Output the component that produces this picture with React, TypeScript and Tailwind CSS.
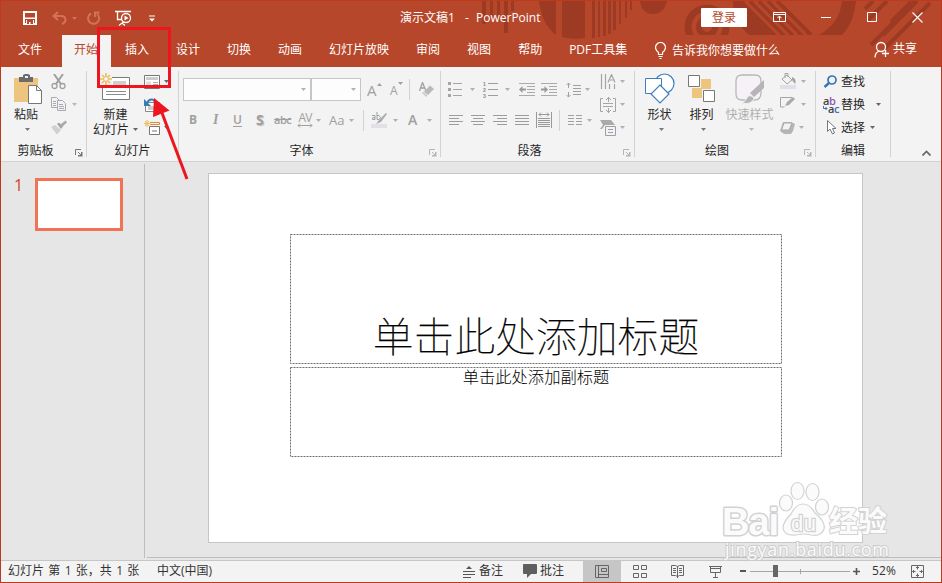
import React from "react";

type IconProps = { w: number; h: number; className?: string; children: React.ReactNode };

function Icon({ w, h, className = "", children }: IconProps) {
  return (
    <svg width={w} height={h} viewBox={`0 0 ${w} ${h}`} fill="none" className={`block shrink-0 ${className}`}>
      {children}
    </svg>
  );
}

function Caret({ className = "" }: { className?: string }) {
  return (
    <Icon w={5} h={3} className={className}>
      <path d="M0 0h5L2.500 3z" fill="currentColor" />
    </Icon>
  );
}

function Lines({ rows, w = 14, h = 13 }: { rows: [number, number, number][]; w?: number; h?: number }) {
  return (
    <Icon w={w} h={h}>
      {rows.map(([x, y, len], i) => (
        <path key={i} d={`M${x} ${y + 0.5}h${len}`} stroke="#9d9d9d" />
      ))}
    </Icon>
  );
}

function Sep() {
  return <div className="my-1 w-px shrink-0 bg-[#d2d2d2]" />;
}

function Launcher({ className = "text-[#777]" }: { className?: string }) {
  return (
    <Icon w={8} h={8} className={className}>
      <path d="M.5 6V.5H6" stroke="currentColor" />
      <path d="M3 3l3.500 3.500" stroke="currentColor" />
      <path d="M7.500 3v4.500H3V6h3V3z" fill="currentColor" />
    </Icon>
  );
}

function Group({
  title,
  width,
  launcher,
  children,
}: {
  title: string;
  width: string;
  launcher?: string;
  children: React.ReactNode;
}) {
  return (
    <div className={`flex shrink-0 flex-col ${width}`}>
      <div className="flex h-[75px] shrink-0">{children}</div>
      <div className="flex h-[18px] items-center text-[#262626]">
        <div className="flex-1 text-center leading-[18px]">{title}</div>
        {launcher && (
          <div className="flex w-4 pl-[5px] pt-[4px]">
            <Launcher className={launcher} />
          </div>
        )}
      </div>
    </div>
  );
}

function Stack({ className, children }: { className: string; children: React.ReactNode }) {
  return <div className={`flex shrink-0 flex-col pt-[3px] ${className}`}>{children}</div>;
}

function Row({ children }: { children: React.ReactNode }) {
  return <div className="flex h-[23px] shrink-0 items-center">{children}</div>;
}

function BigButton({ className, label, icon }: { className: string; label: string; icon: React.ReactNode }) {
  return (
    <div className={`flex shrink-0 flex-col items-center pt-[6px] ${className}`}>
      <div className="flex h-[33px] shrink-0 items-start">{icon}</div>
      <div className="whitespace-nowrap leading-[17px]">{label}</div>
      <Caret className="ml-[3px] mt-[5px] text-[#777]" />
    </div>
  );
}

const tabs = ["开始", "插入", "设计", "切换", "动画", "幻灯片放映", "审阅", "视图", "帮助", "PDF工具集"];

function TitleArt() {
  return (
    <svg width="472" height="66" viewBox="469 1 472 66" className="absolute right-0 top-0" fill="none">
      <g fill="#9d3a24">
        <path d="M482 1h4v23h-4zM490 1h3v15h-3zM497 1h3v20h-3zM504 1h4v32h-4zM511 1h3v10h-3z" />
        <path d="M539 1h17v34q-14-10-17-34zM562 1h23v37q-12 2-23-1z" />
        <path d="M592 1h3v37h-3zM598 1h2v36h-2zM603 1h3v35h-3zM608 1h3v33h-3zM613 1h3v29h-3zM619 1h2v23h-2zM625 1h2v17h-2zM630 1h2v9h-2z" />
        <path d="M640 1h27q-3 13-14 13T640 1z" />
        <path d="M733 1h12l66 34h-62q-16-14-16-34z" />
        <path d="M855 1h2-2z" />
        <path d="M842 1h14q-2 22-14 34h-23q21-12 23-34z" />
      </g>
      <g stroke="#9d3a24">
        <circle cx="707" cy="27" r="19" strokeWidth="7" />
        <circle cx="707" cy="27" r="8" strokeWidth="6" />
      </g>
      <g stroke="#9d3a24" strokeWidth="4">
        <path d="M777 1l34 34M768 1l34 34M759 1l34 34M750 1l34 34" />
      </g>
      <g stroke="#b7472a" strokeWidth="3">
        <path d="M772 1l34 34M763 1l34 34M754 1l34 34M745 1l34 34" />
      </g>
      <path d="M660 35h200v32H660z" fill="#b7472a" />
      <g stroke="#9d3a24" strokeWidth="4">
        <path d="M871 45L915 1M883 35L917 1M865 9l8-8M868 20l19-19M885 48L930 3M891 22l20-20" />
      </g>
    </svg>
  );
}

function TitleBar() {
  return (
    <div className="relative flex h-[34px] shrink-0 items-center text-white">
      <Icon w={14} h={14} className="ml-[22px]">
        <path d="M1 1h12v12H1z" stroke="white" strokeWidth="2" />
        <path d="M1 6.500h12V8H1zM3 9h8v4H3z" fill="white" />
        <path d="M4 9h6v4H7.500v-2H6v2H4z" fill="#b7472a" />
      </Icon>
      <Icon w={15} h={14} className="ml-[15px] text-[#d2725a]">
        <path d="M6 1L1.500 5 6 9M1.500 5H9q4.500 0 4.500 4 0 2.500-3.500 4" stroke="currentColor" strokeWidth="2" />
      </Icon>
      <Caret className="ml-[5px] text-[#d2725a]" />
      <Icon w={14} h={14} className="ml-[10px] text-[#d2725a]">
        <path d="M4 2.500a5.500 5.500 0 1 0 6 .5M8 6V1.500h4.500" stroke="currentColor" strokeWidth="2" />
      </Icon>
      <Icon w={18} h={16} className="ml-[14px]">
        <path d="M0 1.500h16M2.500 2v7.500H7M8 10v3M4 15.500l3-2.500 3 2.500" stroke="white" strokeWidth="1.300" />
        <circle cx="11" cy="8" r="4.500" fill="#b7472a" stroke="white" strokeWidth="1.300" />
        <path d="M9.500 5.500v5L13.500 8z" fill="white" />
      </Icon>
      <Icon w={6} h={7} className="ml-[16px]">
        <path d="M0 1h6" stroke="white" />
        <path d="M0 3.500h6L3 6.500z" fill="white" />
      </Icon>
      <div className="ml-[245px] flex w-[301px]">
        <span className="w-[65px]">演示文稿1</span>
        <span className="w-[11px]">-</span>
        <span>PowerPoint</span>
      </div>
      <div className="mt-[-1px] flex h-[19px] w-[46px] items-center justify-center rounded-[1px] bg-white text-[#b7472a]">登录</div>
      <Icon w={13} h={10} className="ml-[26px] mt-[-2px]">
        <path d="M.5.5h12v9H.5zM.5 2.500h12M6.500 8.500V4.500M4.500 6l2-2 2 2" stroke="white" />
      </Icon>
      <Icon w={10} h={10} className="ml-[35px] mt-[-2px]">
        <path d="M0 5.500h10" stroke="white" />
      </Icon>
      <Icon w={10} h={10} className="ml-[36px] mt-[-2px]">
        <path d="M.5.5h9v9h-9z" stroke="white" />
      </Icon>
      <Icon w={11} h={11} className="ml-[35px] mt-[-2px]">
        <path d="M.5.5l10 10M10.500.5l-10 10" stroke="white" strokeWidth="1.100" />
      </Icon>
    </div>
  );
}

function TabBar() {
  return (
    <div className="relative flex h-8 shrink-0 text-white">
      <div className="flex w-[61px] items-center pb-[2px] pl-[17px]">文件</div>
      <div className="flex gap-[2px]">
        {tabs.map((t, i) => (
          <div
            key={t}
            className={`flex shrink-0 items-center whitespace-nowrap pb-[2px] pl-[12px] pr-[13px] ${
              i === 0 ? "bg-[#f3f3f3] text-[#b7472a]" : ""
            }`}
          >
            {t}
          </div>
        ))}
      </div>
      <div className="ml-auto flex w-[219px] items-center pb-[1px]">
        <Icon w={11} h={17} className="mr-[6px]">
          <path d="M3.500 12.500v-2Q.5 8 .5 5.500a5 5 0 0 1 10 0Q10.500 8 7.500 10.500v2zM3.500 14.500h4M4.500 16.500h2" stroke="white" strokeWidth="1.200" />
        </Icon>
        <span className="whitespace-nowrap">告诉我你想要做什么</span>
      </div>
      <div className="flex w-[67px] items-center pb-[5px]">
        <Icon w={16} h={17} className="mr-[3px] mt-[2px]">
          <circle cx="7" cy="6" r="4.500" stroke="white" strokeWidth="1.300" />
          <path d="M1 16.500q0-5 4.500-6.500M8 12.500h7M11.500 9v7" stroke="white" strokeWidth="1.300" />
        </Icon>
        共享
      </div>
    </div>
  );
}

function ClipboardGroup() {
  return (
    <Group title="剪贴板" width="w-[85px]" launcher="text-[#777]">
      <BigButton
        className="w-[50px] text-[#262626]"
        label="粘贴"
        icon={
          <Icon w={28} h={32} className="ml-1">
            <path d="M0 5h24v24H0z" fill="#edc57e" />
            <path d="M5 4h4V2l2-1h3l2 1v2h3v5H5z" fill="#6b6b6b" />
            <path d="M11 3h3v2h-3z" fill="#f3f3f3" />
            <path d="M14.500 12.500h8l5 5v13h-13z" fill="white" stroke="#777" />
            <path d="M22.500 12.500v5h5" stroke="#777" />
          </Icon>
        }
      />
      <Stack className="w-[34px]">
        <Row>
          <Icon w={15} h={16}>
            <path d="M3 0l7 10M12 0L5 10" stroke="#a0a0a0" strokeWidth="2" />
            <circle cx="3.500" cy="12" r="2.500" stroke="#a0a0a0" strokeWidth="1.300" />
            <circle cx="11.500" cy="12" r="2.500" stroke="#a0a0a0" strokeWidth="1.300" />
          </Icon>
        </Row>
        <Row>
          <Icon w={15} h={14} className="mb-px">
            <path d="M.5.5h5l3 3v7h-8z" stroke="#aaa" />
            <path d="M2 4.500h3M2 6.500h3M2 8.500h3" stroke="#aaa" />
            <path d="M6.500 3.500h5l3 3v7h-8z" fill="#f5f0f7" stroke="#aaa" />
            <path d="M8 7.500h4M8 9.500h5M8 11.500h5" stroke="#aaa" />
          </Icon>
          <Caret className="ml-[6px] text-[#b8b8b8]" />
        </Row>
        <Row>
          <Icon w={16} h={15}>
            <path d="M0 7l4-2 6 5-4 4.500z" fill="#d2ced3" />
            <path d="M6 4l2-1.500 4 4L10 9z" fill="#a5a5a5" />
            <path d="M9.500 4.500l5-4 1.500 2-4.500 4z" fill="#aaa" />
          </Icon>
        </Row>
      </Stack>
    </Group>
  );
}

function SlidesGroup() {
  return (
    <Group title="幻灯片" width="w-[91px]">
      <div className="flex w-[57px] shrink-0 flex-col items-center pt-[6px] text-[#262626]">
        <div className="h-[34px] pr-[2px]">
          <Icon w={30} h={28}>
            <path d="M2.500 4.500h27v22h-27z" fill="white" stroke="#7b7b7b" />
            <path d="M13 8h13v5H13z" fill="#cfcfcf" />
            <path d="M6 18.500h20M6 21.500h20" stroke="#8d8d8d" />
            <path d="M0 0h12v12H0z" fill="#f3f3f3" />
            <path d="M6 0v12M0 6h12M2 2l8 8M10 2l-8 8" stroke="#eebd62" strokeWidth="1.700" />
            <circle cx="6" cy="6" r="2.300" fill="#fff" stroke="#eebd62" />
          </Icon>
        </div>
        <div className="leading-[15px]">新建</div>
        <div className="flex items-center leading-[15px]">
          幻灯片
          <Caret className="ml-1 text-[#666]" />
        </div>
      </div>
      <Stack className="w-[34px]">
        <Row>
          <Icon w={16} h={14}>
            <path d="M.5.5h15v13H.5z" fill="white" stroke="#777" />
            <path d="M2 2h12v3H2z" fill="#ccc" />
            <path d="M2 6.500h5v5H2z" fill="#ddd" />
            <path d="M9 7.500h5M9 9.500h5M9 11.500h5" stroke="#aaa" />
          </Icon>
          <Caret className="ml-[4px] text-[#666]" />
        </Row>
        <Row>
          <Icon w={16} h={14}>
            <path d="M1.500 4.500h14v9h-14z" fill="white" stroke="#888" />
            <path d="M4 8h6v4H4z" fill="#ccc" />
            <path d="M0 1v7h7z" fill="#3d7ab8" />
            <path d="M3 5Q5 1 8 1.500 11 2 11.500 6" stroke="#3d7ab8" strokeWidth="2" />
          </Icon>
        </Row>
        <Row>
          <Icon w={16} h={15}>
            <path d="M3 0v7M0 3.500h6M1 1l4 5M5 1L1 6" stroke="#eebd62" />
            <path d="M6 2.500h9.500v2H6" stroke="#e08a2b" />
            <path d="M5.500 6.500h10v8h-10z" fill="white" stroke="#777" />
            <path d="M8 10h5v2H8z" fill="#bbb" />
          </Icon>
          <Caret className="ml-[4px] text-[#666]" />
        </Row>
      </Stack>
    </Group>
  );
}

function FontGroup() {
  return (
    <Group title="字体" width="w-[261px]" launcher="text-[#b5b5b5]">
      <div className="flex flex-col text-[#a0a0a0]">
        <div className="mt-[11px] flex h-[23px] items-center pl-1">
          <div className="flex h-[23px] w-[128px] items-center justify-end border border-[#c6c6c6] bg-[#fdfdfd] pr-[4px]">
            <Caret className="text-[#b0b0b0]" />
          </div>
          <div className="flex h-[23px] w-[50px] items-center justify-end border border-[#c6c6c6] bg-[#fdfdfd] pr-[4px]">
            <Caret className="text-[#b0b0b0]" />
          </div>
          <span className="ml-[6px] w-[10px] text-[15px]">A</span>
          <Icon w={5} h={3} className="mb-[11px]">
            <path d="M0 3h5L2.500 0z" fill="#a0a0a0" />
          </Icon>
          <span className="ml-[8px] mt-[3px] w-[8px] text-[12px]">A</span>
          <Caret className="mb-[12px]" />
          <div className="ml-[6px] h-[21px] w-px bg-[#d2d2d2]" />
          <Icon w={15} h={16} className="ml-[9px]">
            <path d="M.5 9L3.500.5 6.500 8M1.500 6h4" stroke="#a0a0a0" strokeWidth="1.300" />
            <path d="M5 9.500l6-6 4 3.500-6 6z" fill="#b9b9b9" />
            <path d="M3 11l1.500-1.500 4 4L7 15z" fill="#cdcdcd" />
          </Icon>
        </div>
        <div className="mt-[8px] flex h-[22px] items-center text-[13px]">
          <span className="ml-[10px] w-[22px] text-[12px] font-bold">B</span>
          <span className="w-[21px] pl-[2px] font-['Liberation_Serif'] text-[14px] font-bold italic">I</span>
          <span className="w-[22px] pl-[1px] text-[12px] font-semibold underline underline-offset-2">U</span>
          <span className="w-[20px] pl-[2px] text-[14px] font-bold [text-shadow:1px_1px_1px_#bbb]">S</span>
          <span className="w-[23px] text-[11px] font-semibold tracking-[-0.5px] line-through">abc</span>
          <div className="flex w-[16px] flex-col items-center">
            <span className="text-[12px] leading-[11px] tracking-[-0.8px]">AV</span>
            <Icon w={16} h={5}>
              <path d="M1 2.500h14M3 .5l-2 2 2 2M13 .5l2 2-2 2" stroke="#a0a0a0" />
            </Icon>
          </div>
          <Caret className="ml-[3px] text-[#b0b0b0]" />
          <span className="ml-[8px] w-[17px]">Aa</span>
          <Caret className="ml-[3px] text-[#b0b0b0]" />
          <div className="ml-[9px] h-[21px] w-px bg-[#d2d2d2]" />
          <div className="ml-[7px] w-[16px]">
            <Icon w={16} h={16}>
              <path d="M0 12h16v4H0z" fill="#e4dfe7" />
              <path d="M1 3.500h3v4H1.500q-1.500-2 2.500-2M6 0v7.500h2q3-2 0-4H6" stroke="#a0a0a0" />
              <path d="M5 12l3-4 7-7 1 1-6 8z" fill="#aaa" />
            </Icon>
          </div>
          <Caret className="ml-[6px] text-[#b0b0b0]" />
          <span className="ml-[10px] w-[10px] text-[14px] font-semibold">A</span>
          <Caret className="ml-[9px] text-[#b0b0b0]" />
        </div>
      </div>
    </Group>
  );
}

function ParagraphGroup() {
  return (
    <Group title="段落" width="w-[193px]" launcher="text-[#b5b5b5]">
      <div className="flex w-[159px] flex-col text-[#b0b0b0]">
        <div className="mt-[11px] flex h-[23px] items-center pl-[7px]">
          <Icon w={14} h={15}>
            <path d="M0 0h3v3H0zM0 6h3v3H0zM0 12h3v3H0z" fill="#a5a5a5" />
            <path d="M5 1.500h9M5 7.500h9M5 13.500h9" stroke="#a5a5a5" />
          </Icon>
          <Caret className="ml-[8px]" />
          <div className="ml-[8px] flex items-center gap-[1px]">
            <div className="flex w-[4px] flex-col font-['Liberation_Sans'] text-[5.2px] font-bold leading-[6px] text-[#888]">
              <span>1</span>
              <span>2</span>
              <span>3</span>
            </div>
            <Lines w={10} h={15} rows={[[0, 1, 10], [0, 7, 10], [0, 13, 10]]} />
          </div>
          <Caret className="ml-[7px]" />
          <Icon w={16} h={13} className="ml-[9px]">
            <path d="M0 .5h16M8 3.500h8M8 6.500h8M8 9.500h8M0 12.500h16" stroke="#aaa" />
            <path d="M0 6.500L3.500 3v2.500H7v2H3.500V10z" fill="#999" />
          </Icon>
          <Icon w={16} h={13} className="ml-[6px]">
            <path d="M0 .5h16M8 3.500h8M8 6.500h8M8 9.500h8M0 12.500h16" stroke="#aaa" />
            <path d="M7 6.500L3.500 3v2.500H0v2h3.500V10z" fill="#999" />
          </Icon>
          <Icon w={15} h={16} className="ml-[9px]">
            <path d="M2.500 1v5M.5 3l2-2 2 2M2.500 10v5M.5 13l2 2 2-2M7 3.500h8M7 6.500h8M7 9.500h8M7 12.500h8" stroke="#a0a0a0" />
          </Icon>
          <Caret className="ml-[4px]" />
        </div>
        <div className="mt-[8px] flex h-[22px] items-center pl-[8px]">
          <Lines h={11} rows={[[0, 0, 14], [0, 3, 10], [0, 6, 14], [0, 9, 10]]} />
          <div className="ml-[8px]">
            <Lines h={11} rows={[[0, 0, 14], [2, 3, 10], [0, 6, 14], [2, 9, 10]]} />
          </div>
          <div className="ml-[8px]">
            <Lines h={11} rows={[[0, 0, 14], [4, 3, 10], [0, 6, 14], [4, 9, 10]]} />
          </div>
          <div className="ml-[8px]">
            <Lines h={11} rows={[[0, 0, 14], [0, 3, 14], [0, 6, 14], [0, 9, 14]]} />
          </div>
          <Icon w={16} h={16} className="ml-[7px]">
            <path d="M.5 0v16M15.500 0v16M3 2.500h10M5 .5l-2 2 2 2M11 .5l2 2-2 2M2 6.500h12M2 8.500h12M2 10.500h12M2 12.500h12M2 14.500h12" stroke="#999" />
          </Icon>
          <div className="ml-[7px] h-[21px] w-px bg-[#d2d2d2]" />
          <Icon w={14} h={11} className="ml-[8px]">
            <path d="M0 .5h6M0 3.500h6M0 6.500h6M0 9.500h6M8 .5h6M8 3.500h6M8 6.500h6M8 9.500h6" stroke="#a0a0a0" />
          </Icon>
          <Caret className="ml-[5px]" />
        </div>
      </div>
      <Stack className="w-[34px] text-[#b0b0b0]">
        <Row>
          <Icon w={16} h={16}>
            <path d="M1.500 0v15M5.500 0v15M9.500 10v5M14.500 10v5M8 8.500l3.500-8 3.500 8M9 6h5" stroke="#a5a5a5" strokeWidth="1.200" />
          </Icon>
          <Caret className="ml-[4px]" />
        </Row>
        <Row>
          <Icon w={16} h={16}>
            <path d="M3 1.500H.5v13H3M13 1.500h2.500v13H13M8.500 0v5M6 3l2.500-2.500L11 3M3 6.500h10M3 9.500h10M8.500 11v5M6 13l2.500 2.500L11 13" stroke="#a5a5a5" />
          </Icon>
          <Caret className="ml-[4px]" />
        </Row>
        <Row>
          <Icon w={16} h={16}>
            <path d="M0 0h11l4 5H5L2 9H0l3-4z" fill="#aaa" />
            <path d="M5.500 6.500h10v9h-10z" fill="#f5f0f7" stroke="#a0a0a0" />
            <path d="M8 9.500h5M8 12.500h5" stroke="#a0a0a0" />
          </Icon>
          <Caret className="ml-[4px]" />
        </Row>
      </Stack>
    </Group>
  );
}

function DrawingGroup() {
  return (
    <Group title="绘图" width="w-[180px]" launcher="text-[#b5b5b5]">
      <BigButton
        className="w-[49px] text-[#262626]"
        label="形状"
        icon={
          <Icon w={30} h={31}>
            <circle cx="19.500" cy="10.500" r="9.500" fill="white" stroke="#3f7fbf" strokeWidth="1.200" />
            <path d="M.5 5.500h16v15H.5z" fill="white" stroke="#3f7fbf" />
            <path d="M15 12l9 9-9 9-9-9z" fill="white" stroke="#3f7fbf" strokeWidth="1.200" />
          </Icon>
        }
      />
      <BigButton
        className="w-[35px] text-[#262626]"
        label="排列"
        icon={
          <Icon w={28} h={29} className="mt-px">
            <path d="M13 5h10v10H13zM4 14h10v10H4z" fill="#edc57e" />
            <path d="M.5 1.500h11v11H.5zM15.500 16.500h11v11h-11z" fill="white" stroke="#777" />
          </Icon>
        }
      />
      <BigButton
        className="w-[61px] text-[#b0b0b0] [&>svg]:text-[#b8b8b8]"
        label="快速样式"
        icon={
          <Icon w={30} h={31} className="ml-px mt-px">
            <path d="M7 1h13q6 0 6 6v12q0 7-7 7H7q-6 0-6-6V7q0-6 6-6z" fill="#f6f0f7" stroke="#b8b8b8" strokeWidth="1.300" />
            <path d="M15 19L29 6v8l-10 9z" fill="#b5b5b5" />
            <path d="M7 29q4-2 6-7 5-1 6 3-3 6-12 4z" fill="#b5b5b5" stroke="#f3f3f3" />
          </Icon>
        }
      />
      <Stack className="w-[34px] text-[#b0b0b0]">
        <Row>
          <Icon w={16} h={16} className="mb-px">
            <path d="M0 12h16v4H0z" fill="#e4dfe7" />
            <path d="M2 6l5-4 5 5-5 4zM5 5V.5h3V4" stroke="#a5a5a5" />
            <path d="M12 4q5 2 3 7l-3-4z" fill="#a5a5a5" />
          </Icon>
          <Caret className="ml-[5px]" />
        </Row>
        <Row>
          <Icon w={16} h={14} className="mb-[3px]">
            <path d="M12 1.500H.5v9.500h4" stroke="#a5a5a5" />
            <path d="M5 10l2-4 6-5 2 2-6 6z" fill="#aaa" />
          </Icon>
          <Caret className="ml-[5px]" />
        </Row>
        <Row>
          <Icon w={16} h={14}>
            <path d="M3 1h8l4 2-2 7-2 3H4L0 10z" fill="#b5b5b5" />
            <path d="M4 2h8l-3 7H1.500z" fill="#f6f0f7" stroke="#aaa" />
          </Icon>
          <Caret className="ml-[3px]" />
        </Row>
      </Stack>
    </Group>
  );
}

function EditingGroup() {
  return (
    <Group title="编辑" width="w-[74px]">
      <Stack className="w-[74px] pl-[7px] text-[#262626]">
        <Row>
          <Icon w={15} h={13} className="mr-[3px]">
            <circle cx="9" cy="5" r="4" stroke="#3575b5" strokeWidth="1.700" />
            <path d="M6 8l-4.500 4" stroke="#3575b5" strokeWidth="2.500" />
          </Icon>
          查找
        </Row>
        <Row>
          <div className="mr-[2px] w-[16px] text-[11px] leading-[8px] text-[#444]">
            <div className="font-semibold tracking-[-0.5px]">
              a<span className="text-[#9254b5]">b</span>
            </div>
            <div className="flex items-center font-semibold tracking-[-0.5px]">
              <Icon w={5} h={5}>
                <path d="M.5 0v2.500H4M2.500 1L4 2.500 2.500 4" stroke="#3575b5" />
              </Icon>
              a<span className="text-[#3575b5]">c</span>
            </div>
          </div>
          替换
          <Caret className="ml-[11px] text-[#666]" />
        </Row>
        <Row>
          <Icon w={10} h={15} className="ml-[4px] mr-[4px]">
            <path d="M.5.5v11L3 9l2.500 5 2-1-2-4.500H9z" fill="white" stroke="#777" />
          </Icon>
          选择
          <Caret className="ml-[5px] text-[#666]" />
        </Row>
      </Stack>
    </Group>
  );
}

function Placeholder({ className, height, children }: { className: string; height: number; children: React.ReactNode }) {
  return (
    <div className={`relative flex w-[492px] justify-center ${className}`}>
      <svg width="492" height={height} className="absolute left-0 top-0" fill="none">
        <rect x="0.5" y="0.5" width="491" height={height - 1} stroke="#6f6f6f" strokeDasharray="2 1" />
      </svg>
      {children}
    </div>
  );
}

function Workspace() {
  return (
    <div className="flex h-[398px] shrink-0 bg-[#e6e6e6]">
      <div className="mb-[2px] mt-[2px] flex w-[144px] items-start border-r border-[#bdbdbd] pl-[13px]">
        <div className="mt-[10px] w-[21px] font-['Open_Sans'] text-[16px] leading-[22px] text-[#d24726]">1</div>
        <div className="mt-[14px] h-[53px] w-[88px] border-[3px] border-[#f17353] bg-white" />
      </div>
      <div className="mb-[2px] ml-[2px] flex-1 border-b border-[#bdbdbd] pl-[61px] pt-[11px]">
        <div className="flex h-[370px] w-[655px] flex-col border border-[#c6c6c6] bg-white pl-[81px] pt-[60px] font-['Noto_Sans_CJK_SC'] text-black">
          <Placeholder className="h-[130px] items-end" height={130}>
            <span className="whitespace-nowrap pb-[5px] text-[40.8px] font-thin leading-[48px] [-webkit-text-stroke:0.25px_black]">
              单击此处添加标题
            </span>
          </Placeholder>
          <Placeholder className="mt-[3px] h-[90px] items-start" height={90}>
            <span className="mt-[-1px] whitespace-nowrap text-[16.3px] font-light leading-[20px]">单击此处添加副标题</span>
          </Placeholder>
        </div>
      </div>
    </div>
  );
}

function StatusBar() {
  return (
    <div className="flex h-[22px] shrink-0 items-center border-t border-[#c6c6c6] bg-[#f3f3f3] pb-px text-[#333]">
      <span className="ml-[7px] w-[149px] whitespace-nowrap [word-spacing:1.2px]">幻灯片 第 1 张，共 1 张</span>
      <span className="w-[306px] whitespace-nowrap">中文(中国)</span>
      <Icon w={12} h={13}>
        <path d="M3 4h6L6 1z" fill="#555" />
        <path d="M0 6.500h12M0 9.500h12M0 12.500h8" stroke="#555" />
      </Icon>
      <span className="ml-[4px] w-[44px]">备注</span>
      <Icon w={14} h={14}>
        <path d="M1 0h12q1 0 1 1v8q0 1-1 1H8l-4 4v-4H1q-1 0-1-1V1q0-1 1-1z" fill="#5f5f5f" />
      </Icon>
      <span className="ml-[3px] w-[43px]">批注</span>
      <div className="-mb-px flex h-[21px] w-[38px] items-center justify-center bg-[#c6c6c6]">
        <Icon w={14} h={13}>
          <path d="M.5.5h13v12H.5zM3.500 1v11M6.500 3.500h5v3h-5zM4 9.500h9" stroke="#666" />
        </Icon>
      </div>
      <Icon w={14} h={13} className="ml-[12px]">
        <path d="M.5.5h5v4h-5zM8.500.5h5v4h-5zM.5 8.500h5v4h-5zM8.500 8.500h5v4h-5z" stroke="#666" />
      </Icon>
      <Icon w={13} h={13} className="ml-[24px]">
        <path d="M.5.5h4l2 1 2-1h4v10h-4l-2 1-2-1h-4zM6.500 1v12M2 3.500h3M2 5.500h3M2 7.500h3M8 3.500h3M8 5.500h3M8 7.500h3" stroke="#666" />
      </Icon>
      <Icon w={13} h={13} className="ml-[25px]">
        <path d="M0 1.500h13M1.500 1v6.500h10V1M2 3.500h9M6.500 8v4M4 12.500h5" stroke="#666" />
      </Icon>
      <div className="ml-[18px] h-[2px] w-[6px] bg-[#555]" />
      <Icon w={100} h={12} className="ml-[4px]">
        <path d="M0 6.500h100M50.500 4v5" stroke="#a5a5a5" />
        <path d="M23 0h5v12h-5z" fill="#666" />
      </Icon>
      <Icon w={7} h={7} className="ml-[3px]">
        <path d="M0 3.500h7M3.500 0v7" stroke="#555" strokeWidth="1.600" />
      </Icon>
      <span className="ml-[12px] w-[39px] tracking-[0.2px]">52%</span>
      <Icon w={13} h={13}>
        <path d="M.5.5h12v12H.5zM6.500 1.500v3M5 3l1.500-1.500L8 3M6.500 11.500v-3M5 10l1.500 1.500L8 10M1.500 6.500h3M3 5L1.500 6.500 3 8M11.500 6.500h-3M10 5l1.500 1.500L10 8" stroke="#666" />
      </Icon>
    </div>
  );
}

function Watermark() {
  return (
    <svg width="180" height="90" viewBox="718 477 180 90" className="absolute left-[718px] top-[477px]">
      <g fill="#fbfbfb" stroke="#d2d2d2" strokeWidth="1.2">
        <text x="722" y="535" fontFamily="Liberation Sans" fontWeight="bold" fontSize="38" textLength="57" strokeWidth="3" paintOrder="stroke" strokeLinejoin="round">
          Bai
        </text>
        <ellipse cx="786" cy="503" rx="6.500" ry="8" />
        <ellipse cx="797.500" cy="491" rx="6.500" ry="8.500" />
        <ellipse cx="812.500" cy="492" rx="6.500" ry="8.500" />
        <ellipse cx="822" cy="507" rx="6.500" ry="8" />
        <path d="M803 504q7 0 12 9 11 9 9 16-3 8-13 6-7-2-15 0-12 1-13-7 0-6 8-14 5-10 12-10z" />
        <text x="791" y="531" fontFamily="Liberation Sans" fontSize="22" textLength="25" strokeWidth="2.5" paintOrder="stroke">
          du
        </text>
        <text x="829" y="532" fontFamily="Noto Sans CJK SC" fontWeight="bold" fontSize="29" textLength="58" strokeWidth="2" paintOrder="stroke">
          经验
        </text>
      </g>
      <text
        x="725"
        y="556"
        fontFamily="Open Sans"
        fontWeight="400"
        fontSize="18"
        textLength="164"
        fill="#fafafa"
        stroke="#cdcdcd"
        strokeWidth="2"
        paintOrder="stroke"
      >
        jingyan.baidu.com
      </text>
    </svg>
  );
}

function Annotation() {
  return (
    <svg width="100" height="160" viewBox="95 25 100 160" className="absolute left-[95px] top-[25px]" fill="none">
      <rect x="98.500" y="28.500" width="71" height="58" stroke="#ed1620" strokeWidth="3" />
      <path d="M187 179L162 113" stroke="#ed1620" strokeWidth="3" />
      <path d="M154 98l15.500 12.500L153 117z" fill="#ed1620" />
    </svg>
  );
}

export default function App() {
  return (
    <div className="relative h-[583px] w-[942px] overflow-hidden font-['Open_Sans','Noto_Sans_CJK_SC',sans-serif] text-[12px] leading-[16px]">
      <div className="flex h-full flex-col border border-[#bd3a1c]">
        <div className="relative flex shrink-0 flex-col bg-[#b7472a]">
          <TitleArt />
          <TitleBar />
          <TabBar />
        </div>
        <div className="flex h-[95px] shrink-0 border-b border-[#d2d2d2] bg-[#f3f3f3]">
          <ClipboardGroup />
          <Sep />
          <SlidesGroup />
          <Sep />
          <FontGroup />
          <Sep />
          <ParagraphGroup />
          <Sep />
          <DrawingGroup />
          <Sep />
          <EditingGroup />
          <Sep />
          <div className="flex flex-1 items-end justify-end pb-[5px] pr-[10px]">
            <Icon w={9} h={6}>
              <path d="M.5 5.500l4-4 4 4" stroke="#666" strokeWidth="1.700" />
            </Icon>
          </div>
        </div>
        <Workspace />
        <StatusBar />
      </div>
      <Watermark />
      <Annotation />
    </div>
  );
}
